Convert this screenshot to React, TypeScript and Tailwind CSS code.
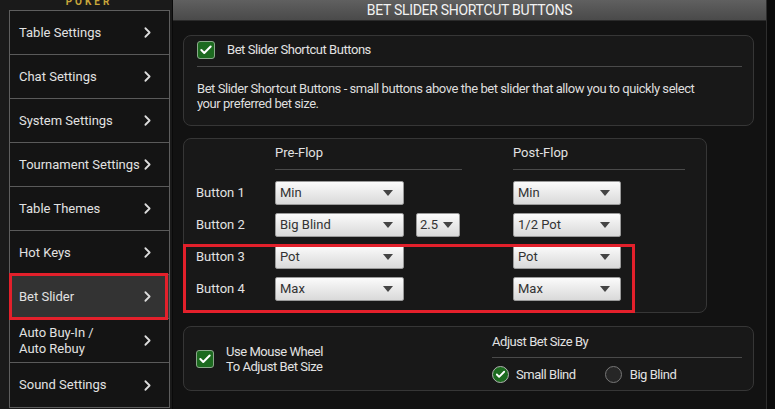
import React from 'react';
import { ChevronRight, Check } from 'lucide-react';

const menu = [
  'Table Settings',
  'Chat Settings',
  'System Settings',
  'Tournament Settings',
  'Table Themes',
  'Hot Keys',
  'Bet Slider',
  'Auto Buy-In /\nAuto Rebuy',
  'Sound Settings',
];

const Select = ({ value, width, small }: { value: string; width: string; small?: boolean }) => (
  <div
    className={`${width} h-[24px] flex items-center justify-between ${small ? 'pl-[3px] pr-[6px]' : 'pl-[4px] pr-[10px]'} rounded-[2px] border border-[#9a9a9a] bg-gradient-to-b from-[#fbfbfb] to-[#d9d9d9] text-[13px] text-[#333]`}
  >
    <span>{value}</span>
    <span className="w-0 h-0 border-l-[5px] border-r-[5px] border-t-[6px] border-l-transparent border-r-transparent border-t-[#444]" />
  </div>
);

const CheckBox = () => (
  <div className="w-[18px] h-[18px] rounded-[3px] bg-[#1c6a1f] border border-[#8aa88a] flex items-center justify-center shrink-0">
    <Check size={14} strokeWidth={3.5} className="text-white" />
  </div>
);

export default function App() {
  return (
    <div className="w-[775px] h-[409px] overflow-hidden flex bg-[#1a1a1a] text-[#e2e2e2] font-['Roboto',sans-serif]">
      {/* sidebar */}
      <div className="w-[172px] shrink-0 flex flex-col">
        <div className="h-[10px] overflow-hidden flex justify-center">
          <span className="mt-[-3px] ml-[6px] text-[10px] font-bold tracking-[3px] text-[#c9a63a] leading-none">POKER</span>
        </div>
        <div className="ml-[9px] w-[161px] border border-[#5e5e5e] bg-[#141414] flex flex-col">
          {menu.map((m, i) => (
            <div
              key={m}
              className={`relative h-[44px] shrink-0 flex items-center pl-[9px] pr-[13px] text-[13px] leading-[16px] ${i < menu.length - 1 ? 'border-b border-[#5a5a5a]' : ''} ${m === 'Bet Slider' ? 'bg-[#333333]' : ''}`}
            >
              <span className="flex-1 min-w-0 whitespace-pre">{m}</span>
              <ChevronRight size={17} strokeWidth={2.5} className="shrink-0 text-[#dcdcdc]" />
              {m === 'Bet Slider' && (
                <div className="absolute left-[-1px] right-[1px] top-[-2px] bottom-[-2px] border-[3px] border-[#e3202b]" />
              )}
            </div>
          ))}
        </div>
      </div>

      {/* main */}
      <div className="w-[594px] shrink-0 flex flex-col bg-[#121212] border-l border-[#0a0a0a]">
        <div className="h-[21px] shrink-0 flex items-center justify-center bg-gradient-to-b from-[#606060] to-[#4a4a4a] border-b border-[#2a2a2a] text-[14px] tracking-[-0.3px] text-[#f2f2f2]">
          BET SLIDER SHORTCUT BUTTONS
        </div>
        <div className="pl-[10px] pt-[14px] flex flex-col">
          {/* card 1 */}
          <div className="w-[571px] h-[91px] rounded-[8px] border border-[#363636] bg-[#181818] pt-[4px] pl-[13px] pr-[11px]">
            <div className="h-[20px] flex items-center gap-[12px]">
              <CheckBox />
              <span className="text-[13px] tracking-[-0.45px]">Bet Slider Shortcut Buttons</span>
            </div>
            <div className="mt-[6px] h-[1px] bg-[#4a4a4a]" />
            <p className="mt-[14px] text-[13px] leading-[15px] tracking-[-0.45px] text-[#dedede]">
              Bet Slider Shortcut Buttons - small buttons above the bet slider that allow you to quickly select
              <br />
              your preferred bet size.
            </p>
          </div>

          {/* card 2 */}
          <div className="relative mt-[12px] w-[524px] h-[175px] rounded-[8px] border border-[#363636] bg-[#181818] pt-[6px] pl-[12px]">
            <div className="grid grid-cols-[79px_238px_172px] text-[13px]">
              <div />
              <div className="pr-[51px]">
                <div className="h-[16px] leading-[16px]">Pre-Flop</div>
                <div className="mt-[8px] h-[1px] bg-[#4a4a4a]" />
              </div>
              <div>
                <div className="h-[16px] leading-[16px]">Post-Flop</div>
                <div className="mt-[8px] h-[1px] bg-[#4a4a4a]" />
              </div>
            </div>
            <div className="mt-[11px] flex flex-col gap-[8px] text-[13px]">
              {[
                ['Button 1', 'Min', '', 'Min'],
                ['Button 2', 'Big Blind', '2.5', '1/2 Pot'],
                ['Button 3', 'Pot', '', 'Pot'],
                ['Button 4', 'Max', '', 'Max'],
              ].map(([label, pre, extra, post]) => (
                <div key={label} className="grid grid-cols-[79px_238px_172px] items-center">
                  <span>{label}</span>
                  <div className="flex items-center gap-[12px]">
                    <Select value={pre} width="w-[129px]" />
                    {extra && <Select value={extra} width="w-[44px]" small />}
                  </div>
                  <Select value={post} width="w-[108px]" />
                </div>
              ))}
            </div>
            <div className="absolute left-[-1px] top-[105px] w-[452px] h-[69px] border-[3px] border-[#e3202b]" />
          </div>

          {/* card 3 */}
          <div className="mt-[13px] w-[571px] h-[65px] rounded-[8px] border border-[#363636] bg-[#181818] flex pl-[12px] pr-[11px] tracking-[-0.45px]">
            <div className="w-[296px] flex items-center gap-[12px]">
              <CheckBox />
              <span className="text-[13px] leading-[15px]">
                Use Mouse Wheel
                <br />
                To Adjust Bet Size
              </span>
            </div>
            <div className="flex-1 pt-[7px]">
              <div className="text-[13px] h-[16px] leading-[16px]">Adjust Bet Size By</div>
              <div className="mt-[7px] h-[1px] bg-[#4a4a4a]" />
              <div className="mt-[7px] flex items-center text-[13px]">
                <div className="w-[17px] h-[17px] rounded-full bg-[#1c6a1f] border border-[#b0b0b0] flex items-center justify-center">
                  <Check size={11} strokeWidth={4} className="text-white" />
                </div>
                <span className="ml-[7px]">Small Blind</span>
                <div className="ml-[29px] w-[17px] h-[17px] rounded-full bg-[#262626] border border-[#777]" />
                <span className="ml-[8px]">Big Blind</span>
              </div>
            </div>
          </div>
        </div>
      </div>

      {/* right edge */}
      <div className="flex-1 bg-[#0b0b0b] border-l border-[#2e2e2e]" />
    </div>
  );
}
